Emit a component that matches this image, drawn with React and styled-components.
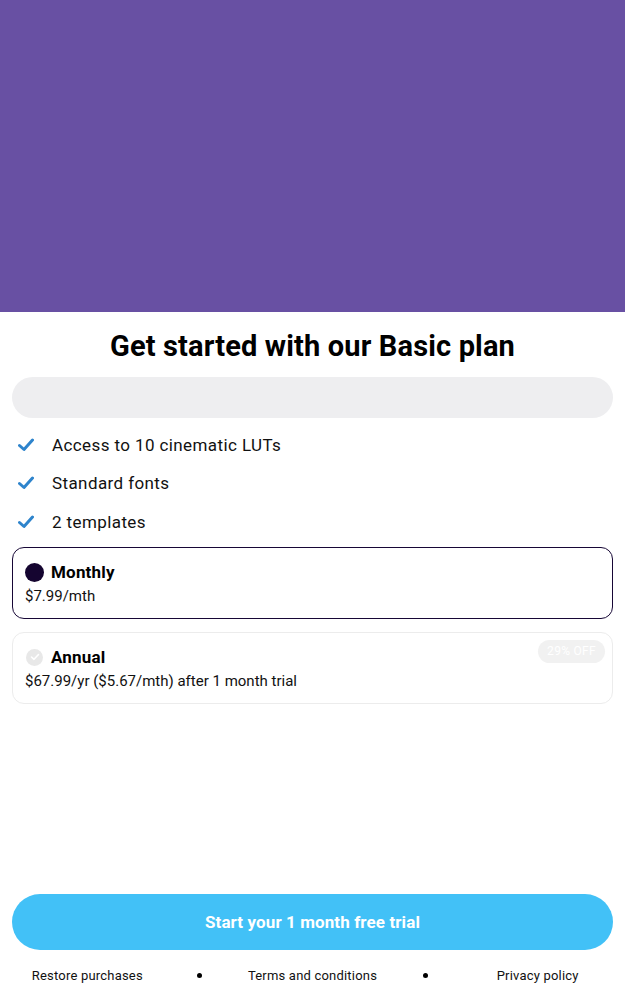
import React, { useState } from "react";
import styled, { createGlobalStyle } from "styled-components";

const GlobalStyle = createGlobalStyle`
  * { box-sizing: border-box; }
  body {
    margin: 0;
    font-family: Roboto, "Liberation Sans", sans-serif;
    background: #fff;
    color: #000;
  }
`;

const features = ["Access to 10 cinematic LUTs", "Standard fonts", "2 templates"];

const CheckIcon = () => (
  <svg width="16" height="14" viewBox="0 0 16 14">
    <path d="M1.5 7.5 L6 11.5 L14.5 2" fill="none" stroke="#2e84cc" strokeWidth="3" strokeLinecap="round" strokeLinejoin="round" />
  </svg>
);

const RadioTick = () => (
  <svg width="10" height="8" viewBox="0 0 10 8">
    <path d="M1.5 4 L4 6.3 L8.5 1.5" fill="none" stroke="#fff" strokeWidth="1.6" strokeLinecap="round" strokeLinejoin="round" />
  </svg>
);

const App = () => {
  const [plan, setPlan] = useState("monthly");
  return (
    <Page>
      <GlobalStyle />
      <Hero />
      <Content>
        <Title>Get started with our Basic plan</Title>
        <Pill />
        <FeatureList>
          {features.map((f) => (
            <Feature key={f}>
              <CheckIcon />
              <span>{f}</span>
            </Feature>
          ))}
        </FeatureList>
        <Plans>
          <PlanCard $active={plan === "monthly"} onClick={() => setPlan("monthly")}>
            <PlanHead>
              <Radio $active={plan === "monthly"}>
                {plan !== "monthly" && <RadioTick />}
              </Radio>
              <PlanName>Monthly</PlanName>
            </PlanHead>
            <PlanPrice>$7.99/mth</PlanPrice>
          </PlanCard>
          <PlanCard $active={plan === "annual"} onClick={() => setPlan("annual")}>
            <Badge>29% OFF</Badge>
            <PlanHead>
              <Radio $active={plan === "annual"}>
                {plan !== "annual" && <RadioTick />}
              </Radio>
              <PlanName>Annual</PlanName>
            </PlanHead>
            <PlanPrice>$67.99/yr ($5.67/mth) after 1 month trial</PlanPrice>
          </PlanCard>
        </Plans>
      </Content>
      <Bottom>
        <CTA>Start your 1 month free trial</CTA>
        <Links>
          <span>Restore purchases</span>
          <Dot />
          <span>Terms and conditions</span>
          <Dot />
          <span>Privacy policy</span>
        </Links>
      </Bottom>
    </Page>
  );
};

const Page = styled.div`
  display: flex;
  flex-direction: column;
  width: 100%;
  height: 1000px;
`;

const Hero = styled.div`
  height: 312px;
  background: #6850a3;
  flex-shrink: 0;
`;

const Content = styled.div`
  display: flex;
  flex-direction: column;
  padding: 0 12px;
  flex: 1;
`;

const Title = styled.h1`
  margin: 16px 0 0;
  text-align: center;
  font-size: 29px;
  font-weight: 700;
  line-height: 36px;
  letter-spacing: 0.15px;
  color: #000;
`;

const Pill = styled.div`
  height: 41px;
  margin-top: 13px;
  border-radius: 21px;
  background: #eeeef0;
`;

const FeatureList = styled.div`
  display: flex;
  flex-direction: column;
  margin-top: 16px;
  gap: 17.5px;
`;

const Feature = styled.div`
  display: flex;
  align-items: center;
  gap: 18px;
  padding-left: 6px;
  height: 21px;
  font-size: 17px;
  letter-spacing: 0.4px;
  color: #111;
`;

const Plans = styled.div`
  display: flex;
  flex-direction: column;
  gap: 13px;
  margin-top: 15px;
`;

const PlanCard = styled.div`
  position: relative;
  padding: 12px;
  border-radius: 12px;
  border: ${(p) => (p.$active ? "1.5px solid #170736" : "1.5px solid #ececec")};
  cursor: pointer;
`;

const PlanHead = styled.div`
  display: flex;
  align-items: center;
  gap: 7px;
`;

const Radio = styled.div`
  width: ${(p) => (p.$active ? "19px" : "17px")};
  height: ${(p) => (p.$active ? "19px" : "17px")};
  margin-left: ${(p) => (p.$active ? "0" : "1px")};
  margin-right: ${(p) => (p.$active ? "0" : "1px")};
  border-radius: 50%;
  background: ${(p) => (p.$active ? "#150530" : "#e8e8e8")};
  display: flex;
  align-items: center;
  justify-content: center;
`;

const PlanName = styled.div`
  font-size: 17px;
  font-weight: 700;
  line-height: 24px;
  letter-spacing: 0.2px;
`;

const PlanPrice = styled.div`
  margin-top: 3px;
  font-size: 15px;
  line-height: 19px;
  color: #111;
`;

const Badge = styled.div`
  position: absolute;
  top: 7px;
  right: 7px;
  padding: 0 9px;
  height: 23px;
  line-height: 23px;
  border-radius: 12px;
  background: #f1f1f1;
  color: #fff;
  font-size: 12px;
  letter-spacing: 0.3px;
`;

const Bottom = styled.div`
  display: flex;
  flex-direction: column;
  padding: 0 12px 16px;
`;

const CTA = styled.button`
  height: 56px;
  border: none;
  border-radius: 28px;
  background: #42c1f7;
  color: #fff;
  font-family: Roboto, "Liberation Sans", sans-serif;
  font-size: 17px;
  font-weight: 700;
  letter-spacing: 0.1px;
  cursor: pointer;
`;

const Links = styled.div`
  display: grid;
  grid-template-columns: repeat(5, minmax(0, 1fr));
  margin: 16px 19px 0 19px;
  height: 18px;
  align-items: center;
  justify-items: center;
  font-size: 13px;
  letter-spacing: 0.2px;
  color: #111;
  white-space: nowrap;
`;

const Dot = styled.span`
  width: 5px;
  height: 5px;
  border-radius: 50%;
  background: #000;
`;

export default App;
